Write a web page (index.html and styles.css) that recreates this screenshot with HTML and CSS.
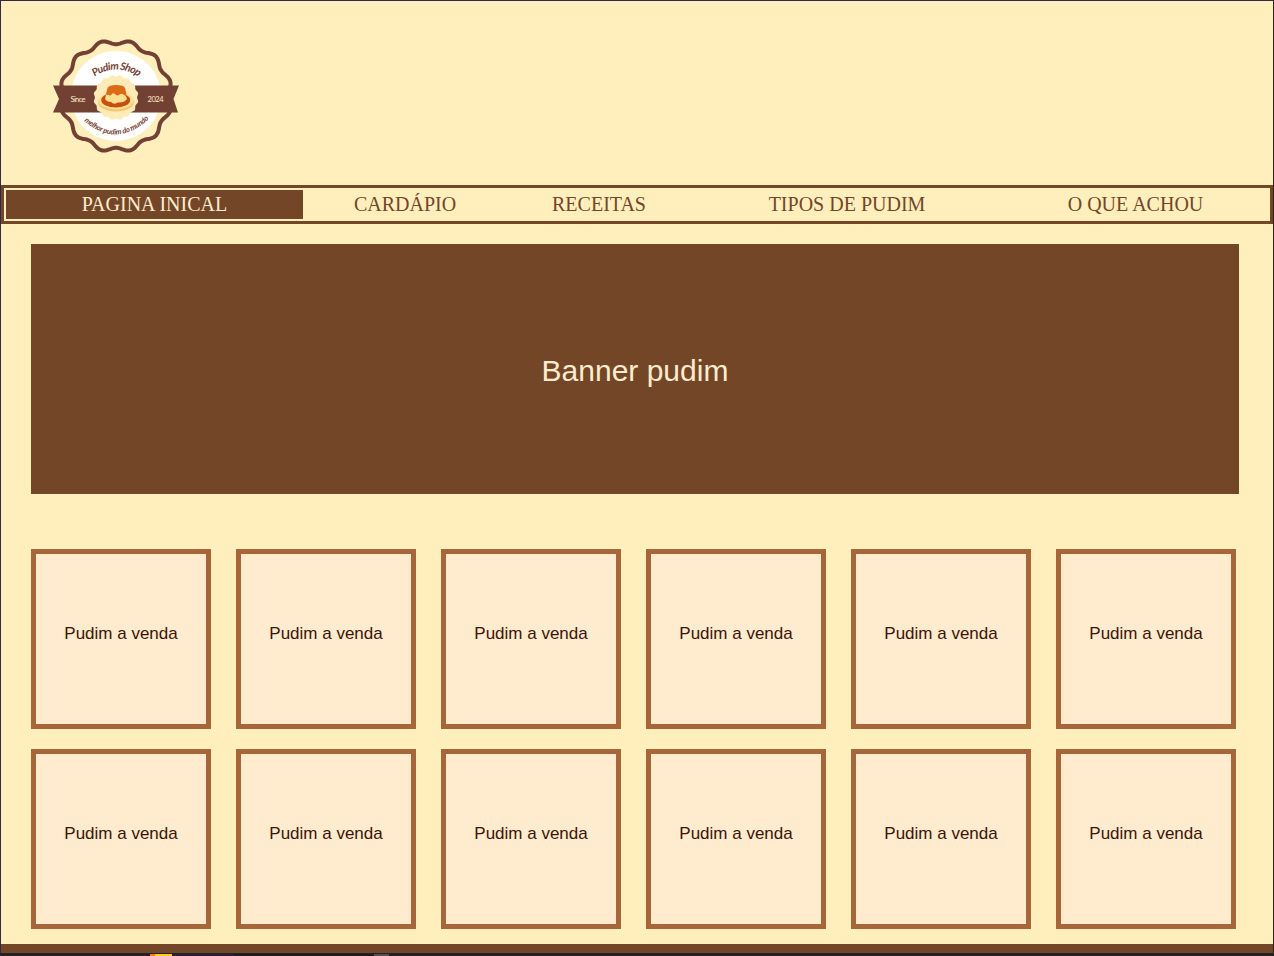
FILE: index.html
```html
<!DOCTYPE html>
<html lang="pt-br">
<head>
<meta charset="utf-8">
<title>Pudim Shop</title>
<link rel="stylesheet" href="styles.css">
</head>
<body>
<div class="page">
  <header class="header">
    <svg class="logo" viewBox="50 36 132 120" role="img" aria-label="Pudim Shop">
      <path id="ring" class="ring"/>
      <circle class="disc" cx="116" cy="96" r="45"/>
      <path class="ribbon" d="M53 85.500H179L173.500 99L178 112.500H53L59 99Z"/>
      <path id="seal" class="seal"/>
      <ellipse class="plate" cx="116" cy="102" rx="18" ry="9.500"/>
      <ellipse class="plate-in" cx="116" cy="100.500" rx="17.500" ry="9"/>
      <ellipse class="sauce" cx="115.700" cy="100" rx="14.500" ry="7.500"/>
      <path class="flan" d="M107.500 90Q106 95 105 99Q107 102 111 102Q114 105 118 102.500Q124 103 127 99Q125 95 124.500 90Z"/>
      <path class="caramel" d="M107.500 88Q109 85 116 85Q124 85 125 88L126.500 94Q125.500 97 123.500 94.500Q121 93 119.500 94.500Q117 96.500 115 94Q113 92.500 111.500 94.500Q109.500 96.500 108.500 94.500Q107 96 106 94Z"/>
      <path id="top-arc" class="guide" d="M90 80Q116 59 143 80"/>
      <path id="bottom-arc" class="guide" d="M82 119Q116 151 151 117"/>
      <text class="script top"><textPath href="#top-arc" startOffset="50%" textLength="47">Pudim Shop</textPath></text>
      <text class="script bottom"><textPath href="#bottom-arc" startOffset="50%" textLength="73">melhor pudim do mundo</textPath></text>
      <text class="script side" x="70.500" y="102" textLength="15">Since</text>
      <text class="script side" x="147.500" y="102" textLength="16">2024</text>
    </svg>
  </header>
  <nav class="nav">
    <a class="active">PAGINA INICAL</a><a>CARDÁPIO</a><a>RECEITAS</a><a>TIPOS DE PUDIM</a><a>O QUE ACHOU</a>
  </nav>
  <main>
    <section class="banner">Banner pudim</section>
    <section class="products">
      <div class="card">Pudim a venda</div><div class="card">Pudim a venda</div><div class="card">Pudim a venda</div>
      <div class="card">Pudim a venda</div><div class="card">Pudim a venda</div><div class="card">Pudim a venda</div>
      <div class="card">Pudim a venda</div><div class="card">Pudim a venda</div><div class="card">Pudim a venda</div>
      <div class="card">Pudim a venda</div><div class="card">Pudim a venda</div><div class="card">Pudim a venda</div>
    </section>
  </main>
  <footer class="footer"></footer>
</div>
<div class="taskbar"><i class="orange"></i><i class="yellow"></i><i class="violet"></i><i class="black"></i><i class="gray"></i></div>
<script src="logo.js"></script>
</body>
</html>
```
FILE: styles.css
```css
* { box-sizing: border-box; }
body { margin: 0; height: 956px; overflow: hidden; background: #222; font-family: "Liberation Sans", Arial, sans-serif; }
.page { height: 953px; border: solid #33284a; border-width: 1px 1px 0; border-right-color: #222; background: #ffefbd; }
.header { height: 184px; padding: 35px 0 0 49px; }
.logo { display: block; width: 132px; height: 120px; }
.ring { fill: #ffefbd; stroke: #734133; stroke-width: 4; }
.disc { fill: #fff; }
.ribbon { fill: #734133; }
.seal { fill: #ffebb8; }
.plate { fill: #f5c66b; }
.plate-in { fill: #ffe09a; }
.sauce { fill: #c8500f; }
.flan { fill: #ffe08f; }
.caramel { fill: #dd6a16; }
.guide { fill: none; }
.script { font-family: "Lato", sans-serif; font-style: italic; fill: #734133; }
.top { font-size: 10.5px; font-weight: bold; text-anchor: middle; }
.bottom { font-size: 7.5px; font-weight: bold; text-anchor: middle; }
.side { font-size: 7.5px; font-style: normal; fill: #ffebcd; }
.nav { display: grid; grid-template-columns: 297px 200px 184px 308px 265px; gap: 2px; height: 39px; padding: 2px; border: 3px solid #734628; }
.nav a { height: 29px; text-align: center; font: 20px/29px "Liberation Serif", "Times New Roman", serif; color: #734628; }
.nav .active { background: #734628; color: #ffebcd; }
.banner { width: 1208px; height: 250px; margin: 20px 0 0 30px; padding-top: 3px; display: flex; align-items: center; justify-content: center; background: #734628; color: #ffebcd; font-size: 30px; }
.products { display: grid; grid-template-columns: repeat(6, 180px); gap: 20px 25px; margin: 55px 0 15px 30px; }
.card { height: 180px; display: flex; align-items: center; justify-content: center; padding-bottom: 10px; border: 5px solid #a66639; background: #ffebcd; color: #3d1408; font-size: 17px; }
.footer { height: 9px; background: #734628; }
.taskbar { display: flex; height: 3px; padding: 1px 0 0 150px; background: #222; }
.orange { width: 5px; background: #f57f17; }
.yellow { width: 17px; background: #ffc928; }
.violet { width: 62px; background: #292037; }
.black { width: 140px; background: #1c1c1c; }
.gray { width: 15px; background: #505050; }
```
FILE: logo.js
```js
function scallop(id, cx, cy, radius, depth, lobes, phase) {
  let d = '';
  for (let i = 0; i < 360; i++) {
    const a = i * Math.PI / 180;
    const r = radius + depth * Math.cos(lobes * a + phase);
    d += (i ? 'L' : 'M') + (cx + r * Math.sin(a)).toFixed(2) + ' ' + (cy - r * Math.cos(a)).toFixed(2);
  }
  document.getElementById(id).setAttribute('d', d + 'Z');
}
scallop('ring', 116, 96, 54, 2.2, 12, Math.PI);
scallop('seal', 116, 97.5, 21.8, 0.7, 16, Math.PI);
```
